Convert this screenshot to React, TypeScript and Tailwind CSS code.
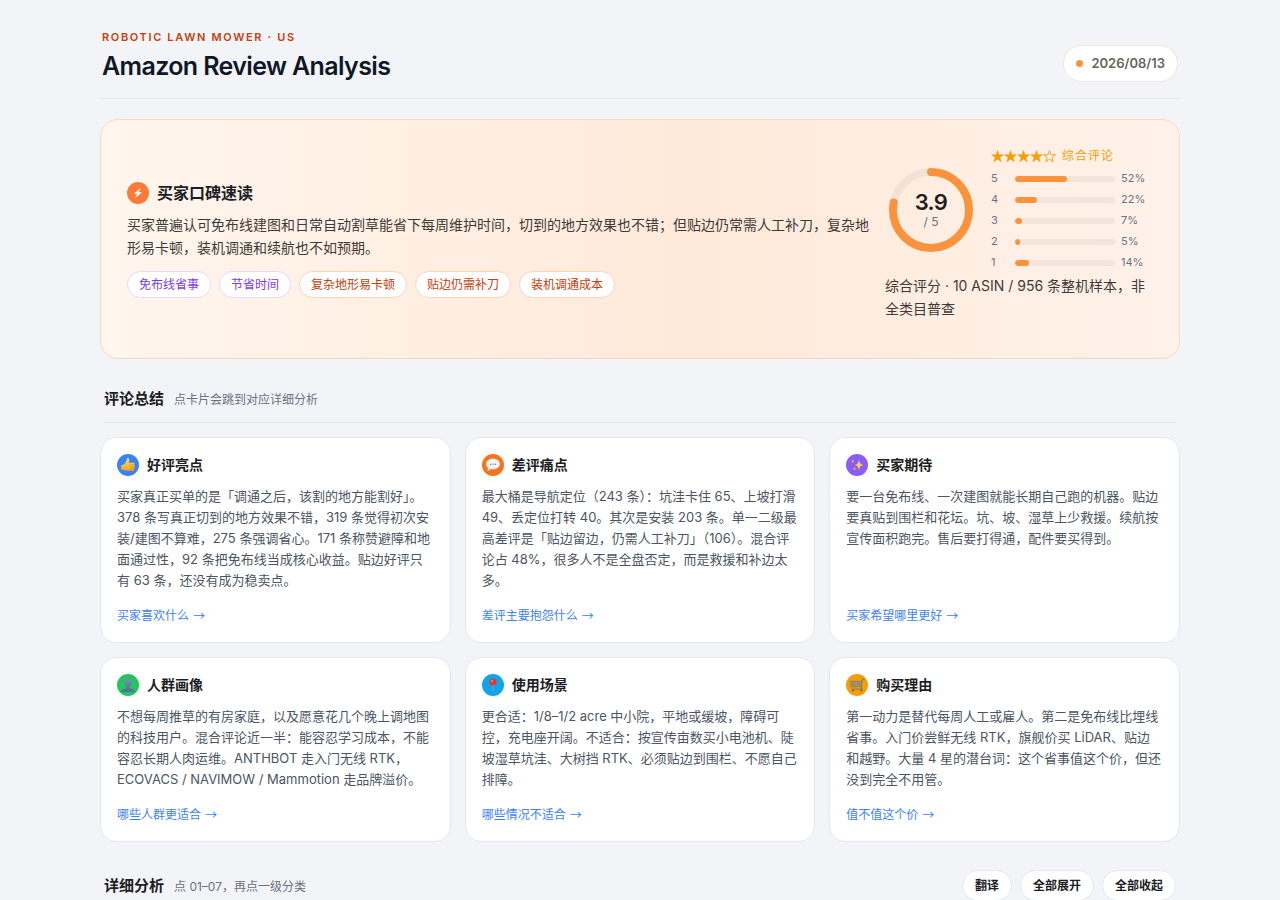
import type { ReactNode } from "react";

type Card = {
  title: string;
  body: string;
  link: string;
  href: string;
  color: string;
  icon: ReactNode;
};

const ThumbIcon = () => (
  <svg viewBox="0 0 16 16" className="size-4" aria-hidden="true">
    <defs>
      <linearGradient id="thumb" x1="0" y1="0" x2="0" y2="1">
        <stop offset="0" stopColor="#ffe05c" />
        <stop offset="1" stopColor="#f5a623" />
      </linearGradient>
    </defs>
    <path
      d="M1.2 8.2c1.6-.2 3-.9 4-2.3C6.300 4.400 6.700 3.200 6.900 1.800c.1-.9 1-1 1.600-.6 1 .7.9 2.600.2 4.600h4.800c1.500 0 1.600 1.800.5 2 1.300.2 1.200 1.900.1 2.100 1 .3.800 1.800-.3 2 .7.400.4 1.800-.8 1.800H7.500c-1.700 0-2.500-.9-4-.9H1.200z"
      fill="url(#thumb)"
    />
    <path d="M10.200 8h3.600M10.200 10h3.500M10.200 12h3" stroke="#d98a1a" strokeWidth="0.6" strokeLinecap="round" fill="none" />
  </svg>
);

const BubbleIcon = () => (
  <svg viewBox="0 0 16 16" className="size-4" aria-hidden="true">
    <path
      d="M8 1.800c3.900 0 6.800 2.200 6.800 5.200s-2.900 5.200-6.800 5.200c-.9 0-1.700-.1-2.500-.3-.8.900-1.900 1.600-3.100 1.900.6-.8.800-1.700.7-2.700C1.800 10.200 1.200 8.700 1.200 7c0-3 2.900-5.200 6.800-5.200z"
      fill="#f4f5f7"
      stroke="#b9bcc2"
      strokeWidth="0.6"
    />
    <circle cx="5.500" cy="7.200" r="0.700" fill="#777b82" />
    <circle cx="8" cy="7.200" r="0.700" fill="#777b82" />
    <circle cx="10.500" cy="7.200" r="0.700" fill="#777b82" />
  </svg>
);

const SparkleIcon = () => (
  <svg viewBox="0 0 16 16" className="size-4" aria-hidden="true">
    <path d="M10 2.500c.5 3.600 1.400 4.900 4.800 5.500-3.400.6-4.300 1.900-4.800 5.500-.5-3.600-1.400-4.900-4.800-5.500 3.400-.6 4.300-1.900 4.800-5.500z" fill="#ffd83d" />
    <path d="M3.800 2c.2 1.400.6 1.900 2 2.200-1.400.3-1.800.8-2 2.200-.2-1.400-.6-1.900-2-2.200 1.400-.3 1.800-.8 2-2.200z" fill="#ffb52e" />
    <path d="M5.500 9.800c.2 1.200.6 1.700 1.900 1.900-1.300.2-1.700.7-1.900 1.900-.2-1.200-.6-1.700-1.900-1.900 1.300-.2 1.700-.7 1.900-1.900z" fill="#ffb52e" />
  </svg>
);

const PersonIcon = () => (
  <svg viewBox="0 0 16 16" className="size-4" aria-hidden="true">
    <defs>
      <linearGradient id="person" x1="0" y1="0" x2="0" y2="1">
        <stop offset="0" stopColor="#7596ac" />
        <stop offset="1" stopColor="#4f6f91" />
      </linearGradient>
    </defs>
    <path
      d="M8 1.200c2.300 0 3.700 1.600 3.700 4 0 2-.7 3.400-1.800 4.300v1.200c.4.900 5 1 5.300 4.300H.8c.3-3.300 4.900-3.400 5.300-4.300V9.500C5 8.600 4.300 7.200 4.300 5.200c0-2.400 1.400-4 3.700-4z"
      fill="url(#person)"
    />
  </svg>
);

const PinIcon = () => (
  <svg viewBox="0 0 16 16" className="size-4" aria-hidden="true">
    <path d="M7.200 7h1.500l-.4 7.500h-.7z" fill="#8f99a3" />
    <circle cx="7.900" cy="5" r="3.600" fill="#e2382f" />
    <circle cx="6.900" cy="4" r="1.100" fill="#ff8a80" />
  </svg>
);

const CartIcon = () => (
  <svg viewBox="0 0 16 16" className="size-4" aria-hidden="true" fill="none" strokeLinecap="round" strokeLinejoin="round">
    <path d="M15 1.800h-1.500l-1.400 8.400M12.100 10.200l.9 1.900H3.200" stroke="#74736c" strokeWidth="0.900" />
    <path d="M1.200 4.200h11.700l-.9 5.300-9.500.7z" fill="#b59a52" stroke="#85806b" strokeWidth="0.700" />
    <path d="M3.800 4.300l.5 5.600M6.200 4.300l.2 5.500M8.500 4.300v5.400M10.700 4.300l-.3 5.300M1.800 6.100h10.700M2.100 8h10.100" stroke="#85806b" strokeWidth="0.500" />
    <circle cx="4" cy="13.600" r="1" fill="#5e5e5a" />
    <circle cx="12.400" cy="13.600" r="1" fill="#5e5e5a" />
  </svg>
);

const Star = ({ filled }: { filled: boolean }) => (
  <svg viewBox="0 0 13 13" className="size-[13px]" aria-hidden="true">
    <path
      d="M6.500.6l1.500 4.200h4.400L8.900 7.500l1.300 4.300-3.700-2.600-3.700 2.600 1.300-4.300L.6 4.800H5z"
      fill={filled ? "#f59e0b" : "none"}
      stroke="#f59e0b"
      strokeWidth={filled ? 0.5 : 0.9}
      strokeLinejoin="miter"
    />
  </svg>
);

const cards: Card[] = [
  {
    title: "好评亮点",
    body: "买家真正买单的是「调通之后，该割的地方能割好」。378 条写真正切到的地方效果不错，319 条觉得初次安装/建图不算难，275 条强调省心。171 条称赞避障和地面通过性，92 条把免布线当成核心收益。贴边好评只有 63 条，还没有成为稳卖点。",
    link: "买家喜欢什么",
    href: "#likes",
    color: "bg-[#3b82f6]",
    icon: <ThumbIcon />,
  },
  {
    title: "差评痛点",
    body: "最大桶是导航定位（243 条）：坑洼卡住 65、上坡打滑 49、丢定位打转 40。其次是安装 203 条。单一二级最高差评是「贴边留边，仍需人工补刀」（106）。混合评论占 48%，很多人不是全盘否定，而是救援和补边太多。",
    link: "差评主要抱怨什么",
    href: "#complaints",
    color: "bg-[#f97316]",
    icon: <BubbleIcon />,
  },
  {
    title: "买家期待",
    body: "要一台免布线、一次建图就能长期自己跑的机器。贴边要真贴到围栏和花坛。坑、坡、湿草上少救援。续航按宣传面积跑完。售后要打得通，配件要买得到。",
    link: "买家希望哪里更好",
    href: "#expectations",
    color: "bg-[#8b5cf6]",
    icon: <SparkleIcon />,
  },
  {
    title: "人群画像",
    body: "不想每周推草的有房家庭，以及愿意花几个晚上调地图的科技用户。混合评论近一半：能容忍学习成本，不能容忍长期人肉运维。ANTHBOT 走入门无线 RTK，ECOVACS / NAVIMOW / Mammotion 走品牌溢价。",
    link: "哪些人群更适合",
    href: "#people",
    color: "bg-[#22c55e]",
    icon: <PersonIcon />,
  },
  {
    title: "使用场景",
    body: "更合适：1/8–1/2 acre 中小院，平地或缓坡，障碍可控，充电座开阔。不适合：按宣传亩数买小电池机、陡坡湿草坑洼、大树挡 RTK、必须贴边到围栏、不愿自己排障。",
    link: "哪些情况不适合",
    href: "#scenes",
    color: "bg-[#0ea5e9]",
    icon: <PinIcon />,
  },
  {
    title: "购买理由",
    body: "第一动力是替代每周人工或雇人。第二是免布线比埋线省事。入门价尝鲜无线 RTK，旗舰价买 LiDAR、贴边\n和越野。大量 4 星的潜台词：这个省事值这个价，但还没到完全不用管。",
    link: "值不值这个价",
    href: "#reasons",
    color: "bg-[#f59e0b]",
    icon: <CartIcon />,
  },
];

const tags = [
  { label: "免布线省事", good: true },
  { label: "节省时间", good: true },
  { label: "复杂地形易卡顿", good: false },
  { label: "贴边仍需补刀", good: false },
  { label: "装机调通成本", good: false },
];

const ratings = [
  { star: 5, percent: 52 },
  { star: 4, percent: 22 },
  { star: 3, percent: 7 },
  { star: 2, percent: 5 },
  { star: 1, percent: 14 },
];

const actions = ["翻译", "全部展开", "全部收起"];

const ScoreRing = () => {
  const length = 2 * Math.PI * 38;
  return (
    <div className="relative size-[84px] shrink-0">
      <svg viewBox="0 0 84 84" className="size-full -rotate-90" aria-hidden="true">
        <circle cx="42" cy="42" r="38" fill="none" stroke="#f3e3d7" strokeWidth="8" />
        <circle
          cx="42"
          cy="42"
          r="38"
          fill="none"
          stroke="#fb923c"
          strokeWidth="8"
          strokeLinecap="round"
          strokeDasharray={`${length * 0.78} ${length}`}
        />
      </svg>
      <div className="absolute inset-0 flex flex-col items-center justify-center">
        <span className="text-[22px] leading-6 font-semibold tracking-tight text-[#1d1d26]">3.9</span>
        <span className="text-xs leading-4 text-gray-500">/ 5</span>
      </div>
    </div>
  );
};

const SectionTitle = ({ title, hint, children }: { title: string; hint: string; children?: ReactNode }) => (
  <div className="mx-1 flex items-center justify-between border-b border-[#e5e7eb] pb-[11px]">
    <div className="flex items-baseline gap-2.5">
      <h2 className="text-[15px] leading-6 font-bold text-[#1d1d26]">{title}</h2>
      <span className="text-xs text-gray-500">{hint}</span>
    </div>
    {children}
  </div>
);

const App = () => {
  return (
    <div lang="zh-CN" className="min-h-screen bg-[#f3f4f8] font-['Inter','Noto_Sans_CJK_SC',sans-serif]">
      <div className="mx-auto max-w-[1080px] pt-7 pb-10">
        <header className="flex items-end justify-between border-b border-[#e5e7eb] px-0.5 pb-4">
          <div>
            <p className="text-[11px] leading-[18px] font-semibold tracking-[0.15em] text-[#c2410c]">
              ROBOTIC LAWN MOWER · US
            </p>
            <h1 className="mt-1 text-[25px] leading-8 font-semibold tracking-tight text-gray-900">
              Amazon Review Analysis
            </h1>
          </div>
          <div className="flex items-center gap-2 rounded-full border border-[#f0e6dc] bg-white px-3 py-2 text-[13px] leading-[19px] font-semibold text-[#69655a]">
            <span className="size-[7px] rounded-full bg-[#fb923c]" />
            2026/08/13
          </div>
        </header>

        {/* Quick read */}
        <section className="mt-5 flex items-center justify-between gap-4 rounded-[18px] border border-[#fed7b8] bg-linear-[90deg,#fff6ed_0%,#ffe9da_55%,#fff2e9_100%] p-[26px]">
          <div>
            <div className="flex items-center gap-2">
              <span className="flex size-[22px] items-center justify-center rounded-full bg-[#ff7a36]">
                <svg viewBox="0 0 12 12" className="size-3" aria-hidden="true">
                  <path d="M9.200.8 2 6.500l3.200.2-2.400 4.500 7.200-5.700-3.500-.2z" fill="#fff" />
                </svg>
              </span>
              <h2 className="text-base leading-6 font-bold text-[#1d1d26]">买家口碑速读</h2>
            </div>
            <p className="mt-2 text-sm leading-[23px] text-[#3f3a36]">
              买家普遍认可免布线建图和日常自动割草能省下每周维护时间，切到的地方效果也不错；但贴边仍常需人工补刀，复杂地形易卡顿，装机调通和续航也不如预期。
            </p>
            <ul className="mt-3 flex flex-wrap gap-2">
              {tags.map((tag) => (
                <li
                  key={tag.label}
                  className={`rounded-full border bg-white px-[11px] py-1 text-xs leading-[17px] ${
                    tag.good ? "border-[#e4d8fd] text-[#7c3aed]" : "border-[#fed3b4] text-[#c2410c]"
                  }`}
                >
                  {tag.label}
                </li>
              ))}
            </ul>
          </div>

          <div className="w-[268px] shrink-0 pb-3">
            <div className="flex items-center gap-[18px] pl-1">
              <ScoreRing />
              <div className="pb-[3px]">
                <p className="flex items-center gap-1.5 text-xs leading-5 text-[#f59e0b]">
                  <span className="flex" role="img" aria-label="4 / 5">
                    {[1, 2, 3, 4, 5].map((n) => (
                      <Star key={n} filled={n <= 4} />
                    ))}
                  </span>
                  <span className="tracking-[1px]">综合评论</span>
                </p>
                <ul className="mt-1 flex flex-col gap-1">
                  {ratings.map((row) => (
                    <li key={row.star} className="flex items-center gap-1.5 text-[11px] leading-[17px] text-gray-500">
                      <span className="w-[18px]">{row.star}</span>
                      <span className="h-1.5 w-[100px] overflow-hidden rounded-full bg-[#f3e5db]">
                        <span className="block h-full rounded-full bg-[#fb923c]" style={{ width: `${row.percent}%` }} />
                      </span>
                      <span>{row.percent}%</span>
                    </li>
                  ))}
                </ul>
              </div>
            </div>
            <p className="text-sm leading-[23px] text-[#3f3a36]">综合评分 · 10 ASIN / 956 条整机样本，非全类目普查</p>
          </div>
        </section>

        {/* Summary */}
        <section className="mt-7">
          <SectionTitle title="评论总结" hint="点卡片会跳到对应详细分析" />
          <div className="mt-3.5 grid grid-cols-3 gap-3.5">
            {cards.map((card) => (
              <article key={card.title} className="flex flex-col rounded-2xl border border-[#e5e7ee] bg-white p-4">
                <div className="flex items-center gap-2">
                  <span className={`flex size-[22px] items-center justify-center rounded-full ${card.color}`}>
                    {card.icon}
                  </span>
                  <h3 className="text-sm leading-[22px] font-bold text-[#1d1d26]">{card.title}</h3>
                </div>
                <p className="mt-2.5 text-[13px] leading-[21px] whitespace-pre-line text-[#4b5563]">{card.body}</p>
                <a href={card.href} className="mt-auto flex gap-1 pt-[15px] text-xs leading-5 text-[#3b82f6]">
                  {card.link}
                  <span className="font-['Noto_Sans_CJK_SC',sans-serif]">→</span>
                </a>
              </article>
            ))}
          </div>
        </section>

        {/* Details */}
        <section className="mt-7">
          <SectionTitle title="详细分析" hint="点 01–07，再点一级分类">
            <div className="flex gap-2">
              {actions.map((label) => (
                <button
                  key={label}
                  type="button"
                  className="rounded-full border border-[#e5e7eb] bg-white px-3 py-1.5 text-xs leading-[17px] font-semibold text-[#1d1d26]"
                >
                  {label}
                </button>
              ))}
            </div>
          </SectionTitle>
        </section>
      </div>
    </div>
  );
};

export default App;
